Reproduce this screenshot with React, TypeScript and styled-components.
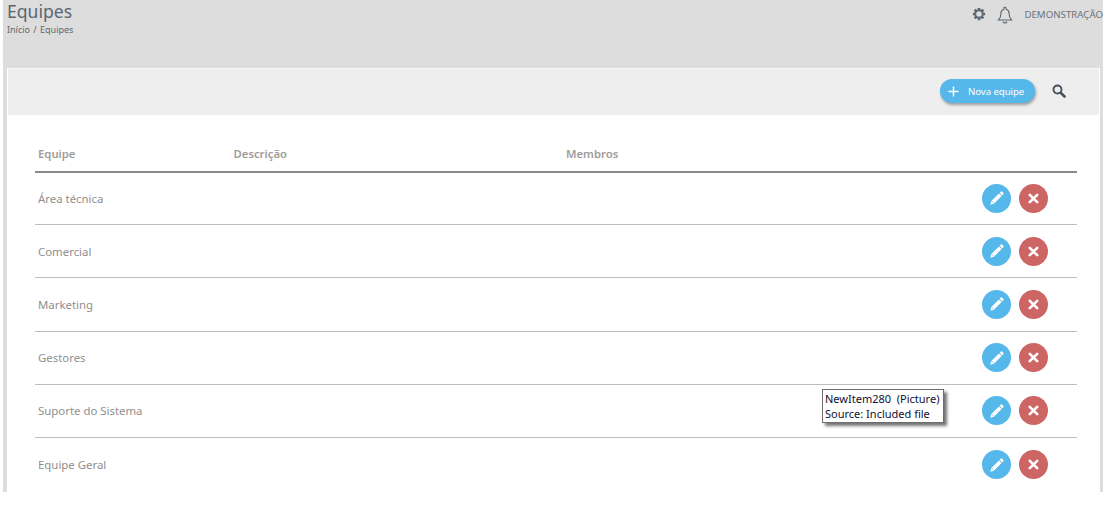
import React from "react";
import styled, { createGlobalStyle } from "styled-components";

const Global = createGlobalStyle`
  html, body { margin: 0; padding: 0; background: #fff; }
  body { font-family: "Noto Sans", "Open Sans", sans-serif; overflow: hidden; }
`;

const Page = styled.div`
  position: relative;
  width: 1108px;
  height: 507px;
  background: #fff;
  overflow: hidden;
`;

const Shell = styled.div`
  margin-left: 3px;
  width: 1100px;
  height: 492px;
  background: #dddddd;
  display: flex;
  flex-direction: column;
  overflow: hidden;
`;

const Header = styled.header`
  height: 68px;
  flex: none;
  display: flex;
  justify-content: space-between;
  align-items: flex-start;
  padding: 0 0 0 4px;
`;

const TitleBlock = styled.div`
  display: flex;
  flex-direction: column;
`;

const Title = styled.h1`
  margin: 0;
  font-size: 17.6px;
  line-height: 23px;
  font-weight: 400;
  color: #5a6672;
`;

const Crumbs = styled.div`
  margin-top: 1px;
  font-size: 9px;
  line-height: 12px;
  color: #5f6870;
  word-spacing: 1px;
`;

const HeaderTools = styled.div`
  display: flex;
  align-items: center;
  height: 28px;
`;

const ToolIcon = styled.svg`
  display: block;
  color: #5c6670;
`;

const BellIcon = styled(ToolIcon)`
  margin-left: 11px;
  margin-top: 2px;
`;

const UserName = styled.span`
  margin-left: 11px;
  font-size: 9.7px;
  color: #6a747d;
  white-space: nowrap;
`;

const Card = styled.main`
  margin-left: 4px;
  width: 1093px;
  flex: 1;
  box-sizing: border-box;
  border-top: 1px solid #f8f8f8;
  border-left: 1px solid #ffffff;
  border-right: 1px solid #ffffff;
  background: #fff;
  display: flex;
  flex-direction: column;
`;

const Toolbar = styled.div`
  height: 46px;
  flex: none;
  background: #eeeeee;
  display: flex;
  align-items: center;
  justify-content: flex-end;
  padding: 0 33px 0 0;
`;

const NewButton = styled.button`
  width: 95px;
  height: 24px;
  margin-right: 17px;
  margin-top: -3px;
  border: 0;
  border-radius: 12px;
  background: #55b7ea;
  color: #fff;
  box-shadow: 1px 2px 3px rgba(0, 0, 0, 0.35);
  display: flex;
  align-items: center;
  padding: 1px 0 0 8px;
  font-family: inherit;
  font-size: 9.7px;
  letter-spacing: -0.1px;
`;

const NewLabel = styled.span`
  margin-left: 9px;
`;

const SearchIcon = styled.svg`
  display: block;
  margin-top: -3px;
`;

const Table = styled.div`
  margin: 0 22px 0 27px;
  display: flex;
  flex-direction: column;
`;

const HeadRow = styled.div`
  height: 58px;
  flex: none;
  box-sizing: border-box;
  display: grid;
  grid-template-columns: 195.5px 332.5px 1fr;
  align-items: center;
  padding: 20px 0 0 3px;
  border-bottom: 2px solid #8a8a8a;
  font-size: 11.3px;
  font-weight: 600;
  color: #a09c9a;
`;

const Row = styled.div`
  height: 53.2px;
  flex: none;
  box-sizing: border-box;
  display: flex;
  align-items: center;
  justify-content: space-between;
  padding: 0 29px 0 3px;
  border-bottom: 1px solid #bdbdbd;
  font-size: 11.4px;
  color: #8f8f8f;
  &:nth-child(2) {
    margin-top: -1px;
  }
  &:last-child {
    border-bottom: 0;
  }
`;

const Actions = styled.div`
  display: flex;
  gap: 8px;
`;

const RoundButton = styled.button<{ $tone: string }>`
  width: 29px;
  height: 29px;
  padding: 0;
  border: 0;
  border-radius: 50%;
  background: ${(p) => p.$tone};
  display: flex;
  align-items: center;
  justify-content: center;
`;

const Tooltip = styled.div`
  position: absolute;
  left: 822px;
  top: 389px;
  width: 122px;
  height: 34px;
  box-sizing: border-box;
  padding: 1px 0 0 2px;
  background: #fff;
  border: 1px solid #6e6e6e;
  box-shadow: 3px 3px 3px rgba(0, 0, 0, 0.55);
  font-family: "Noto Sans", sans-serif;
  font-size: 11px;
  line-height: 15px;
  color: #101030;
  white-space: pre;
`;

const Gear = () => (
  <ToolIcon width="14" height="14" viewBox="0 0 24 24" fill="none" stroke="currentColor">
    <circle cx="12" cy="12" r="6.500" strokeWidth="3.500" />
    <path
      strokeWidth="4.500"
      d="M12 1.500v3M12 19.500v3M1.500 12h3M19.500 12h3M4.600 4.600l2.100 2.100M17.300 17.300l2.100 2.100M4.600 19.400l2.100-2.100M17.300 6.700l2.100-2.100"
    />
  </ToolIcon>
);

const Bell = () => (
  <BellIcon width="16" height="19" viewBox="0 0 16 19" fill="none" stroke="currentColor" strokeWidth="1.100">
    <path d="M8 1.200c.7 0 1.100.4 1.100 1.100v.9c2 .6 3 2.200 3 4.300 0 3 .6 4.800 2.400 6.500H1.500c1.800-1.700 2.400-3.500 2.400-6.500 0-2.100 1-3.700 3-4.300v-.9c0-.7.400-1.100 1.100-1.100z" />
    <path d="M6 15.500c.3 1 1 1.500 2 1.500s1.700-.5 2-1.500" />
  </BellIcon>
);

const Plus = () => (
  <svg width="11" height="11" viewBox="0 0 11 11" stroke="#fff" strokeWidth="1.500">
    <path d="M5.500 .5v10M.5 5.500h10" />
  </svg>
);

const Search = () => (
  <SearchIcon width="14" height="14" viewBox="0 0 14 14" fill="none" stroke="#44505c">
    <circle cx="5.500" cy="5.500" r="4" strokeWidth="1.900" />
    <path d="M8.800 8.800l3.700 3.700" strokeWidth="2.600" strokeLinecap="round" />
  </SearchIcon>
);

const Pencil = () => (
  <svg width="16" height="16" viewBox="0 0 16 16" fill="#fff">
    <path d="M11.600 1.800a1.200 1.200 0 0 1 1.700 0l.9.9a1.200 1.200 0 0 1 0 1.700l-1 1-2.600-2.600zM10 3.400l2.600 2.600-7.700 7.700-3.600 1 1-3.600z" />
    <path d="M3.100 11.300l1.600 1.600" stroke="#55b7ea" strokeWidth=".8" />
  </svg>
);

const Cross = () => (
  <svg width="11" height="11" viewBox="0 0 11 11" stroke="#fff" strokeWidth="2.600" strokeLinecap="round">
    <path d="M1.800 1.800l7.400 7.400M9.200 1.800l-7.400 7.400" />
  </svg>
);

const teams = ["Área técnica", "Comercial", "Marketing", "Gestores", "Suporte do Sistema", "Equipe Geral"];

export default function App() {
  return (
    <Page>
      <Global />
      <Shell>
        <Header>
          <TitleBlock>
            <Title>Equipes</Title>
            <Crumbs>Início / Equipes</Crumbs>
          </TitleBlock>
          <HeaderTools>
            <Gear />
            <Bell />
            <UserName>DEMONSTRAÇÃO</UserName>
          </HeaderTools>
        </Header>
        <Card>
          <Toolbar>
            <NewButton>
              <Plus />
              <NewLabel>Nova equipe</NewLabel>
            </NewButton>
            <Search />
          </Toolbar>
          <Table>
            <HeadRow>
              <span>Equipe</span>
              <span>Descrição</span>
              <span>Membros</span>
            </HeadRow>
            {teams.map((t) => (
              <Row key={t}>
                <span>{t}</span>
                <Actions>
                  <RoundButton $tone="#55b7ea">
                    <Pencil />
                  </RoundButton>
                  <RoundButton $tone="#cd6565">
                    <Cross />
                  </RoundButton>
                </Actions>
              </Row>
            ))}
          </Table>
        </Card>
      </Shell>
      <Tooltip>{"NewItem280  (Picture)\nSource: Included file"}</Tooltip>
    </Page>
  );
}
